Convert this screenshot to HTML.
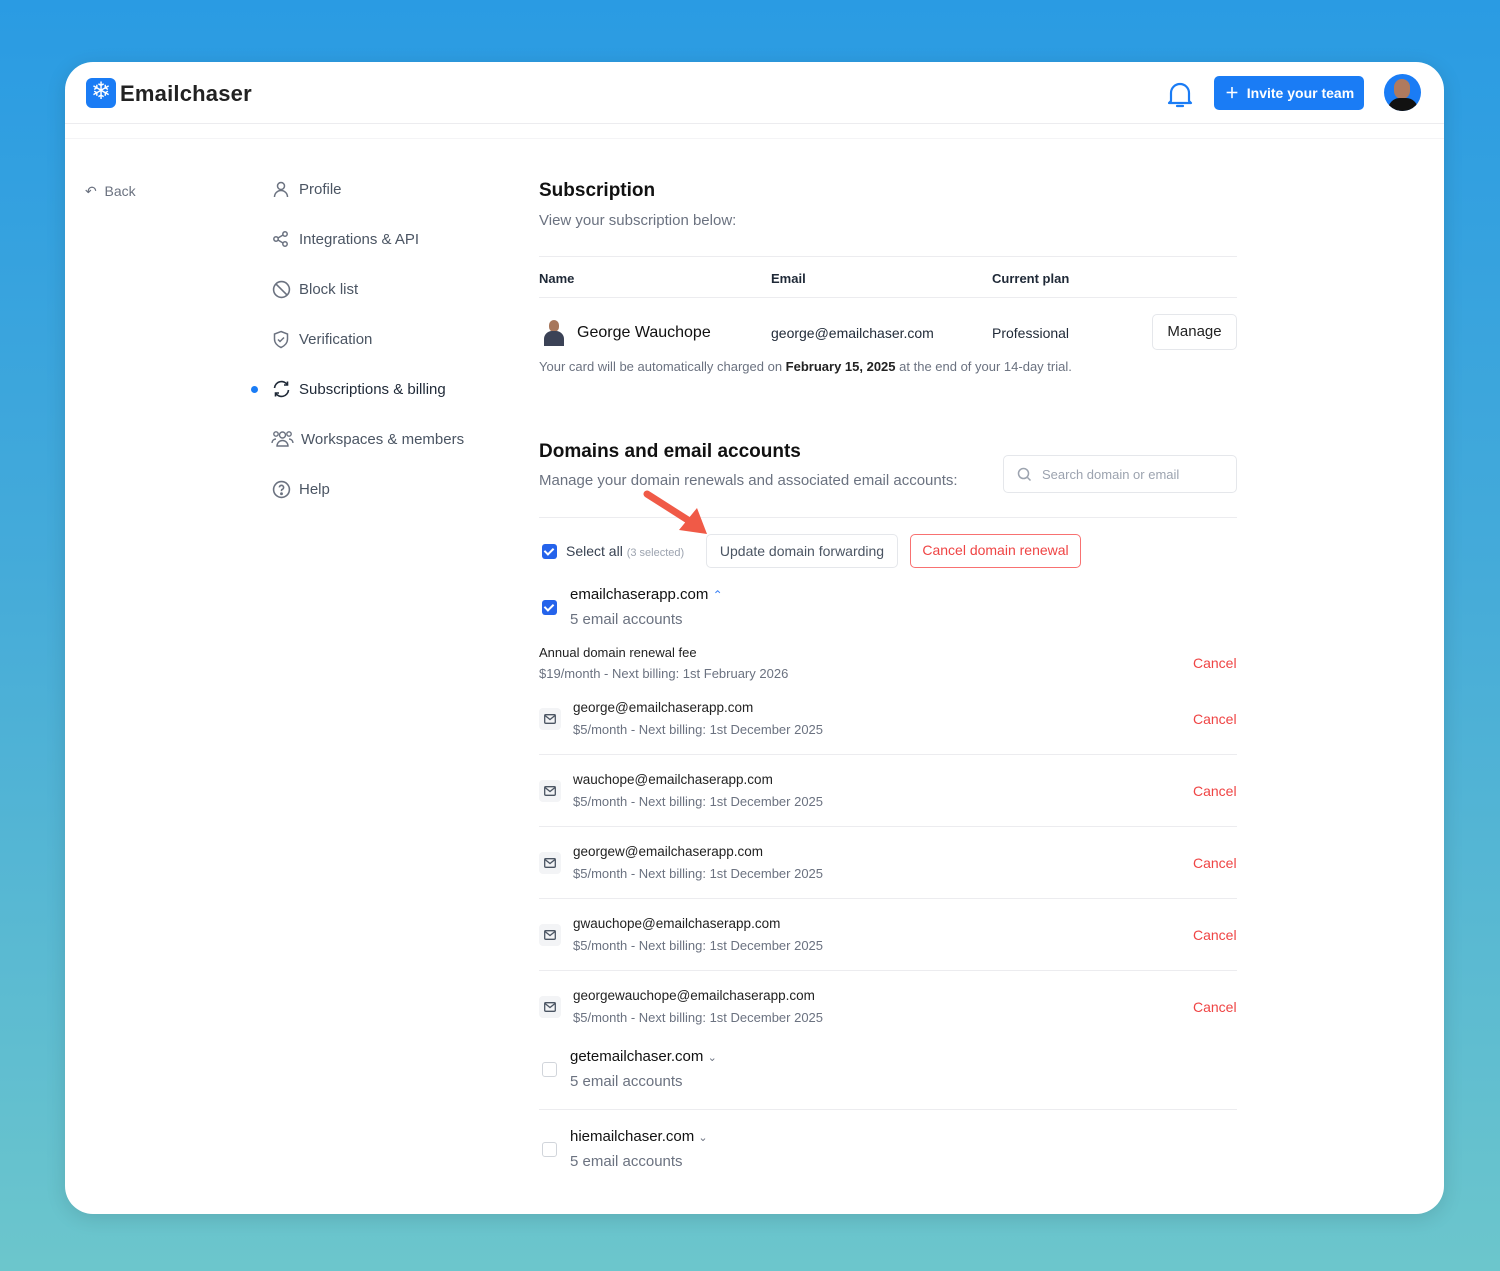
<!DOCTYPE html>
<html><head><meta charset="utf-8"><style>
*{margin:0;padding:0;box-sizing:border-box}
body{width:1500px;height:1271px;overflow:hidden;font-family:"Liberation Sans",sans-serif;background:linear-gradient(180deg,#2a9be3 0%,#45abd9 45%,#6cc6cc 100%);position:relative}
.card{position:absolute;left:65px;top:62px;width:1379px;height:1152px;background:#fff;border-radius:28px;overflow:hidden;box-shadow:0 4px 20px rgba(0,0,0,.12)}
.a{position:absolute;white-space:nowrap}
.g{color:#6b7280}
.d{color:#1f2937}
.nav{font-size:15px;color:#4b5563}
.ic{position:absolute}
.hr{position:absolute;height:1px;background:#ececef}
.cb{position:absolute;width:15px;height:15px;border-radius:3px;background:#2563eb}
.cb:after{content:"";position:absolute;left:4px;top:2px;width:4px;height:7px;border:solid #fff;border-width:0 2px 2px 0;transform:rotate(45deg)}
.cbo{position:absolute;width:15px;height:15px;border-radius:3px;border:1px solid #d1d5db;background:#fff}
.red{color:#ef4444;font-size:14px}
.mail{position:absolute;width:22px;height:22px;border-radius:4px;background:#f3f4f6}
</style></head><body>
<div class="card">
 <div class="a" style="left:21px;top:16px;width:30px;height:30px;border-radius:6px;background:#1a7cf5"></div>
 <div class="a" style="left:21px;top:14px;width:30px;height:30px;color:#fff;font-size:24px;text-align:center;line-height:32px">❄</div>
 <div class="a d" style="left:55px;top:19px;font-size:22px;font-weight:bold;color:#222;letter-spacing:0.2px">Emailchaser</div>
 <svg class="ic" style="left:1101px;top:18px" width="28" height="30" viewBox="0 0 28 30"><path d="M5 21V13a9 9 0 0 1 18 0v8l2 2H3z" fill="none" stroke="#1a7cf5" stroke-width="2.2" stroke-linejoin="round"/><path d="M11 26h6" stroke="#1a7cf5" stroke-width="2.2" stroke-linecap="round"/></svg>
 <div class="a" style="left:1149px;top:14px;width:150px;height:34px;background:#1a7cf5;border-radius:5px;color:#fff;font-size:14px;font-weight:bold;line-height:34px;padding-left:11px">＋&nbsp; Invite your team</div>
 <div class="a" style="left:1319px;top:12px;width:37px;height:37px;border-radius:50%;background:#1a7cf5;overflow:hidden"><div style="position:absolute;left:10px;top:5px;width:16px;height:20px;border-radius:8px;background:#b07a5e"></div><div style="position:absolute;left:4px;top:24px;width:30px;height:20px;border-radius:12px 12px 0 0;background:#111"></div></div>
 <div class="hr" style="left:0;top:61px;width:1379px"></div>
 <div class="hr" style="left:0;top:76px;width:1379px;background:#f4f4f6"></div>

 <div class="a" style="left:20px;top:121px;font-size:14px;color:#6b7280">↶&nbsp; Back</div>
 <svg class="ic" style="left:207px;top:118px" width="18" height="18" viewBox="0 0 18 18" fill="none" stroke="#6b7280" stroke-width="1.5"><circle cx="9" cy="6" r="3.5"/><path d="M2.5 17a6.5 6.5 0 0 1 13 0"/></svg>
 <div class="a nav" style="left:234px;top:119px">Profile</div>
 <svg class="ic" style="left:207px;top:168px" width="18" height="18" viewBox="0 0 18 18" fill="none" stroke="#6b7280" stroke-width="1.5"><circle cx="13" cy="4" r="2.2"/><circle cx="4" cy="9" r="2.2"/><circle cx="13" cy="14" r="2.2"/><path d="M6 8l5-3M6 10l5 3"/></svg>
 <div class="a nav" style="left:234px;top:169px">Integrations &amp; API</div>
 <svg class="ic" style="left:207px;top:218px" width="19" height="19" viewBox="0 0 18 18" fill="none" stroke="#6b7280" stroke-width="1.5"><circle cx="9" cy="9" r="7.5"/><path d="M3.7 3.7l10.6 10.6"/></svg>
 <div class="a nav" style="left:234px;top:219px">Block list</div>
 <svg class="ic" style="left:207px;top:268px" width="18" height="19" viewBox="0 0 18 19" fill="none" stroke="#6b7280" stroke-width="1.5"><path d="M9 1.5l6.5 2.5v5c0 4-3 7-6.5 8.5C5.5 16 2.5 13 2.5 9V4z"/><path d="M6 9.5l2 2 4-4"/></svg>
 <div class="a nav" style="left:234px;top:269px">Verification</div>
 <div class="a" style="left:186px;top:324px;width:7px;height:7px;border-radius:50%;background:#1a7cf5"></div>
 <svg class="ic" style="left:207px;top:318px" width="19" height="18" viewBox="0 0 19 18" fill="none" stroke="#1f2937" stroke-width="1.6"><path d="M2.5 8a7 7 0 0 1 13-3M16.5 10a7 7 0 0 1-13 3"/><path d="M15.5 1.5v3.5H12M3.5 16.5V13H7"/></svg>
 <div class="a nav" style="left:234px;top:319px;color:#1f2937;font-weight:500">Subscriptions &amp; billing</div>
 <svg class="ic" style="left:206px;top:367px" width="23" height="20" viewBox="0 0 23 20" fill="none" stroke="#6b7280" stroke-width="1.4"><circle cx="11.5" cy="6" r="3"/><circle cx="5" cy="5" r="2.2"/><circle cx="18" cy="5" r="2.2"/><path d="M6 17a5.5 5.5 0 0 1 11 0zM1 14a4 4 0 0 1 4-4M22 14a4 4 0 0 0-4-4"/></svg>
 <div class="a nav" style="left:236px;top:369px">Workspaces &amp; members</div>
 <svg class="ic" style="left:207px;top:418px" width="19" height="19" viewBox="0 0 18 18" fill="none" stroke="#6b7280" stroke-width="1.5"><circle cx="9" cy="9" r="7.5"/><path d="M7 7a2 2 0 1 1 2.5 2c-.5.2-.5.7-.5 1.5"/><circle cx="9" cy="13" r=".6" fill="#6b7280"/></svg>
 <div class="a nav" style="left:234px;top:419px">Help</div>

 <div class="a d" style="left:474px;top:118px;font-size:19px;font-weight:bold;color:#111">Subscription</div>
 <div class="a g" style="left:474px;top:150px;font-size:15px">View your subscription below:</div>
 <div class="hr" style="left:474px;top:194px;width:698px"></div>
 <div class="a d" style="left:474px;top:209px;font-size:13px;font-weight:bold">Name</div>
 <div class="a d" style="left:706px;top:209px;font-size:13px;font-weight:bold">Email</div>
 <div class="a d" style="left:927px;top:209px;font-size:13px;font-weight:bold">Current plan</div>
 <div class="hr" style="left:474px;top:235px;width:698px"></div>
 <div class="a" style="left:477px;top:256px;width:24px;height:28px;overflow:hidden"><div style="position:absolute;left:7px;top:2px;width:10px;height:12px;border-radius:5px;background:#a7775c"></div><div style="position:absolute;left:2px;top:13px;width:20px;height:15px;border-radius:8px 8px 0 0;background:#3b4256"></div></div>
 <div class="a d" style="left:512px;top:262px;font-size:16px;font-weight:500;color:#111">George Wauchope</div>
 <div class="a d" style="left:706px;top:263px;font-size:14px">george@emailchaser.com</div>
 <div class="a d" style="left:927px;top:263px;font-size:14px">Professional</div>
 <div class="a" style="left:1087px;top:252px;width:85px;height:36px;border:1px solid #e5e7eb;border-radius:5px;font-size:15px;font-weight:500;color:#222;text-align:center;line-height:34px">Manage</div>
 <div class="a g" style="left:474px;top:297px;font-size:13px">Your card will be automatically charged on <b style="color:#222">February 15, 2025</b> at the end of your 14-day trial.</div>

 <div class="a" style="left:474px;top:379px;font-size:19px;font-weight:bold;color:#111">Domains and email accounts</div>
 <div class="a g" style="left:474px;top:410px;font-size:15px">Manage your domain renewals and associated email accounts:</div>
 <div class="a" style="left:938px;top:393px;width:234px;height:38px;border:1px solid #e5e7eb;border-radius:5px"></div>
 <svg class="ic" style="left:952px;top:405px" width="15" height="15" viewBox="0 0 15 15" fill="none" stroke="#9ca3af" stroke-width="1.5"><circle cx="6.5" cy="6.5" r="5"/><path d="M10.5 10.5l3 3"/></svg>
 <div class="a" style="left:977px;top:405px;font-size:13px;color:#9ca3af">Search domain or email</div>
 <div class="hr" style="left:474px;top:455px;width:698px"></div>
 <svg class="ic" style="left:576px;top:426px" width="70" height="50" viewBox="0 0 70 50"><path d="M6 6l44 28" stroke="#f05a47" stroke-width="7" stroke-linecap="round"/><path d="M38 42l28 4-10-26z" fill="#f05a47"/></svg>
 <div class="cb" style="left:477px;top:482px"></div>
 <div class="a" style="left:501px;top:481px;font-size:14px;color:#374151">Select all <span style="font-size:11px;color:#9ca3af">(3 selected)</span></div>
 <div class="a" style="left:641px;top:472px;width:192px;height:34px;border:1px solid #e5e7eb;border-radius:5px;font-size:14px;color:#4b5563;text-align:center;line-height:32px">Update domain forwarding</div>
 <div class="a" style="left:845px;top:472px;width:171px;height:34px;border:1.5px solid #f87171;border-radius:5px;font-size:14px;color:#ef4444;text-align:center;line-height:31px">Cancel domain renewal</div>

 <div class="cb" style="left:477px;top:538px"></div>
 <div class="a" style="left:505px;top:524px;font-size:15px;color:#111">emailchaserapp.com <span style="color:#3b82f6;font-size:12px">⌃</span></div>
 <div class="a g" style="left:505px;top:549px;font-size:15px">5 email accounts</div>
 <div class="a" style="left:474px;top:583px;font-size:13px;color:#222">Annual domain renewal fee</div>
 <div class="a g" style="left:474px;top:604px;font-size:13px">$19/month - Next billing: 1st February 2026</div>
 <div class="a red" style="left:1128px;top:593px">Cancel</div>

 <div class="mail" style="left:474px;top:646px"></div><svg class="ic" style="left:479px;top:652px" width="12" height="10" viewBox="0 0 12 10" fill="none" stroke="#4b5563" stroke-width="1.3"><rect x=".7" y=".7" width="10.6" height="8.6" rx="1"/><path d="M1 1.5l5 4 5-4"/></svg>
 <div class="a" style="left:508px;top:638px;font-size:13.5px;color:#222">george@emailchaserapp.com</div>
 <div class="a g" style="left:508px;top:660px;font-size:13px">$5/month - Next billing: 1st December 2025</div>
 <div class="a red" style="left:1128px;top:649px">Cancel</div>
 <div class="hr" style="left:474px;top:692px;width:698px"></div>

 <div class="mail" style="left:474px;top:718px"></div><svg class="ic" style="left:479px;top:724px" width="12" height="10" viewBox="0 0 12 10" fill="none" stroke="#4b5563" stroke-width="1.3"><rect x=".7" y=".7" width="10.6" height="8.6" rx="1"/><path d="M1 1.5l5 4 5-4"/></svg>
 <div class="a" style="left:508px;top:710px;font-size:13.5px;color:#222">wauchope@emailchaserapp.com</div>
 <div class="a g" style="left:508px;top:732px;font-size:13px">$5/month - Next billing: 1st December 2025</div>
 <div class="a red" style="left:1128px;top:721px">Cancel</div>
 <div class="hr" style="left:474px;top:764px;width:698px"></div>

 <div class="mail" style="left:474px;top:790px"></div><svg class="ic" style="left:479px;top:796px" width="12" height="10" viewBox="0 0 12 10" fill="none" stroke="#4b5563" stroke-width="1.3"><rect x=".7" y=".7" width="10.6" height="8.6" rx="1"/><path d="M1 1.5l5 4 5-4"/></svg>
 <div class="a" style="left:508px;top:782px;font-size:13.5px;color:#222">georgew@emailchaserapp.com</div>
 <div class="a g" style="left:508px;top:804px;font-size:13px">$5/month - Next billing: 1st December 2025</div>
 <div class="a red" style="left:1128px;top:793px">Cancel</div>
 <div class="hr" style="left:474px;top:836px;width:698px"></div>

 <div class="mail" style="left:474px;top:862px"></div><svg class="ic" style="left:479px;top:868px" width="12" height="10" viewBox="0 0 12 10" fill="none" stroke="#4b5563" stroke-width="1.3"><rect x=".7" y=".7" width="10.6" height="8.6" rx="1"/><path d="M1 1.5l5 4 5-4"/></svg>
 <div class="a" style="left:508px;top:854px;font-size:13.5px;color:#222">gwauchope@emailchaserapp.com</div>
 <div class="a g" style="left:508px;top:876px;font-size:13px">$5/month - Next billing: 1st December 2025</div>
 <div class="a red" style="left:1128px;top:865px">Cancel</div>
 <div class="hr" style="left:474px;top:908px;width:698px"></div>

 <div class="mail" style="left:474px;top:934px"></div><svg class="ic" style="left:479px;top:940px" width="12" height="10" viewBox="0 0 12 10" fill="none" stroke="#4b5563" stroke-width="1.3"><rect x=".7" y=".7" width="10.6" height="8.6" rx="1"/><path d="M1 1.5l5 4 5-4"/></svg>
 <div class="a" style="left:508px;top:926px;font-size:13.5px;color:#222">georgewauchope@emailchaserapp.com</div>
 <div class="a g" style="left:508px;top:948px;font-size:13px">$5/month - Next billing: 1st December 2025</div>
 <div class="a red" style="left:1128px;top:937px">Cancel</div>

 <div class="cbo" style="left:477px;top:1000px"></div>
 <div class="a" style="left:505px;top:986px;font-size:15px;color:#111">getemailchaser.com <span style="color:#6b7280;font-size:11px">⌄</span></div>
 <div class="a g" style="left:505px;top:1011px;font-size:15px">5 email accounts</div>
 <div class="hr" style="left:474px;top:1047px;width:698px"></div>
 <div class="cbo" style="left:477px;top:1080px"></div>
 <div class="a" style="left:505px;top:1066px;font-size:15px;color:#111">hiemailchaser.com <span style="color:#6b7280;font-size:11px">⌄</span></div>
 <div class="a g" style="left:505px;top:1091px;font-size:15px">5 email accounts</div>
</div>
</body></html>
